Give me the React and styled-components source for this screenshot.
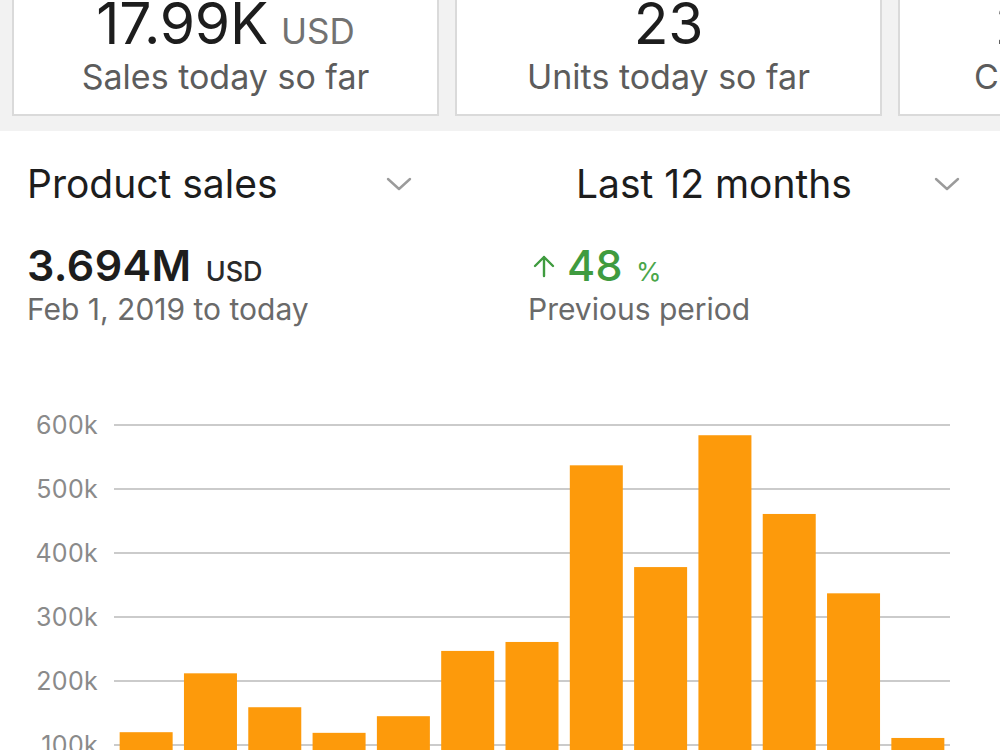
import React from 'react'
import styled, { createGlobalStyle } from 'styled-components'

const GlobalStyle = createGlobalStyle`
  html, body {
    margin: 0;
    background: #fff;
    overflow: hidden;
  }
  body {
    font-family: Inter, "Liberation Sans", sans-serif;
    color: #1d1d1d;
  }
`

const stats = [
  { value: '17.99K', unit: 'USD', label: 'Sales today so far' },
  { value: '23', label: 'Units today so far' },
  { value: '21.9K', unit: 'USD', label: 'Cost today so far' },
]

// monthly product sales, in thousands
const monthly = [120, 212, 159, 119, 145, 247, 261, 537, 378, 584, 461, 337, 111]
const ticks = [600, 500, 400, 300, 200, 100, 0]

function Chevron() {
  return (
    <svg width="26" height="14" viewBox="0 0 26 14">
      <polyline points="2,2 13,12 24,2" fill="none" stroke="#9b9b9b" strokeWidth="2.4" strokeLinecap="round" strokeLinejoin="round" />
    </svg>
  )
}

function UpArrow() {
  return (
    <svg width="24" height="24" viewBox="0 0 24 24">
      <path d="M12 22V3M3 12l9-9 9 9" fill="none" stroke="#3f9b3f" strokeWidth="2.4" strokeLinecap="round" strokeLinejoin="round" />
    </svg>
  )
}

function SalesChart() {
  const left = 114
  const right = 950
  const top = 25
  const step = 0.64 // px per 1k
  const slot = (right - left) / monthly.length
  const barW = 53
  const yFor = (v) => top + (600 - v) * step

  return (
    <ChartSvg width="1000" height="420" viewBox="0 0 1000 420">
      {ticks.map((t) => (
        <g key={t}>
          <line x1={left} x2={right} y1={yFor(t)} y2={yFor(t)} stroke="#cbcbcb" strokeWidth="2" />
          <AxisText x="98" y={yFor(t)} textAnchor="end" dominantBaseline="central">
            {t}k
          </AxisText>
        </g>
      ))}
      {monthly.map((v, i) => (
        <rect
          key={i}
          x={left + i * slot + (slot - barW) / 2}
          y={yFor(v)}
          width={barW}
          height={yFor(0) - yFor(v)}
          fill="#fd9a0b"
        />
      ))}
    </ChartSvg>
  )
}

function App() {
  return (
    <Page>
      <GlobalStyle />
      <Strip>
        {stats.map((s) => (
          <Card key={s.label}>
            <CardValue>
              {s.value}
              {s.unit && <CardUnit>{s.unit}</CardUnit>}
            </CardValue>
            <CardLabel>{s.label}</CardLabel>
          </Card>
        ))}
      </Strip>

      <Panel>
        <Column>
          <Selector $width={385}>
            <span>Product sales</span>
            <Chevron />
          </Selector>
          <Figure>
            <BigNumber>
              3.694M<SmallUnit>USD</SmallUnit>
            </BigNumber>
            <Caption>Feb 1, 2019 to today</Caption>
          </Figure>
        </Column>
        <Column>
          <Selector $width={432} $indent={48}>
            <span>Last 12 months</span>
            <Chevron />
          </Selector>
          <Figure>
            <BigNumber $green>
              <UpArrow />
              <Change>48</Change>
              <Percent>%</Percent>
            </BigNumber>
            <Caption>Previous period</Caption>
          </Figure>
        </Column>
      </Panel>

      <ChartWrap>
        <SalesChart />
      </ChartWrap>
    </Page>
  )
}

const Page = styled.div`
  width: 1000px;
  height: 750px;
  overflow: hidden;
  background: #fff;
`

const Strip = styled.div`
  display: flex;
  gap: 16px;
  margin-top: -20px;
  padding: 0 0 15px 12px;
  background: #f2f2f2;
  overflow: hidden;
`

const Card = styled.div`
  flex: 0 0 427px;
  box-sizing: border-box;
  display: flex;
  flex-direction: column;
  align-items: center;
  padding: 13px 0 16px;
  background: #fff;
  border: 2px solid #dadada;
`

const CardValue = styled.div`
  display: flex;
  align-items: baseline;
  font-size: 57px;
  line-height: 1;
  color: #1d1d1d;
  letter-spacing: -0.3px;
`

const CardUnit = styled.span`
  margin-left: 13px;
  font-size: 35px;
  color: #727272;
  letter-spacing: 0;
`

const CardLabel = styled.div`
  margin-top: 5px;
  font-size: 34px;
  line-height: 1.2;
  color: #5c5c5c;
`

const Panel = styled.div`
  display: grid;
  grid-template-columns: 501px 1fr;
  padding-left: 27px;
`

const Column = styled.div`
  display: flex;
  flex-direction: column;
`

const Selector = styled.div`
  display: flex;
  align-items: center;
  justify-content: space-between;
  box-sizing: border-box;
  width: ${(p) => p.$width}px;
  margin-top: 31px;
  padding-left: ${(p) => p.$indent || 0}px;
  font-size: 39px;
  line-height: 1.14;
  color: #1d1d1d;
`

const Figure = styled.div`
  margin-top: 38px;
`

const BigNumber = styled.div`
  display: flex;
  align-items: baseline;
  font-size: 43px;
  line-height: 1;
  letter-spacing: 0.4px;
  font-weight: ${(p) => (p.$green ? 500 : 600)};
  color: ${(p) => (p.$green ? '#3f9b3f' : '#1d1d1d')};

  svg {
    align-self: center;
    margin: 0 11px 0 4px;
  }
`

const SmallUnit = styled.span`
  margin-left: 14px;
  font-size: 27px;
  font-weight: 500;
  letter-spacing: 0;
  color: #2a2a2a;
`

const Change = styled.span``

const Percent = styled.span`
  margin-left: 13px;
  font-size: 26px;
  font-weight: 400;
  color: #4aa64a;
`

const Caption = styled.div`
  margin-top: 4px;
  font-size: 30px;
  line-height: 1.2;
  color: #6a6a6a;
`

const ChartWrap = styled.div`
  margin-top: 73px;
`

const ChartSvg = styled.svg`
  display: block;
`

const AxisText = styled.text`
  font-family: Inter, "Liberation Sans", sans-serif;
  font-size: 25px;
  letter-spacing: 0.3px;
  fill: #8a8a8a;
`

export default App
